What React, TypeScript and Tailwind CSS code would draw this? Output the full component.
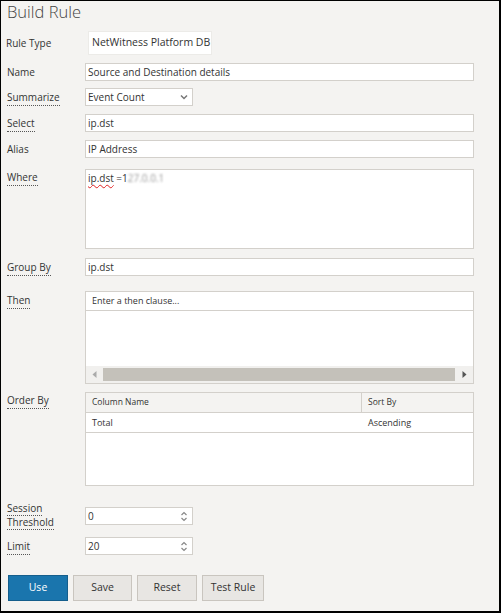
import React from "react";

const font = { fontFamily: '"Open Sans", "Liberation Sans", sans-serif' };

function Label({ children, dotted = false, className = "" }: { children: React.ReactNode; dotted?: boolean; className?: string }) {
  return (
    <div className={`w-[78px] shrink-0 text-[10px] leading-[13px] text-[#333] ${className}`}>
      <span className={dotted ? "border-b border-dotted border-[#555] pb-[1px]" : ""}>{children}</span>
    </div>
  );
}

function Input({ value, className = "w-[389px]" }: { value: string; className?: string }) {
  return (
    <div className={`h-[18px] bg-white border border-[#d3d0cb] px-[2px] flex items-center text-[10px] text-[#333] whitespace-nowrap ${className}`}>
      {value}
    </div>
  );
}

function Spinner() {
  return (
    <svg width="8" height="11" viewBox="0 0 8 11" className="mr-[4px]">
      <path d="M1.5 4 L4 1.5 L6.5 4" fill="none" stroke="#888" strokeWidth="1.2" />
      <path d="M1.5 7 L4 9.5 L6.5 7" fill="none" stroke="#888" strokeWidth="1.2" />
    </svg>
  );
}

export default function App() {
  return (
    <div style={font} className="w-[501px] h-[613px] bg-[#f4f3f1] border-t border-l border-r-2 border-b-2 border-black flex flex-col pl-[6px] overflow-hidden">
      <div className="h-[22px] text-[16.5px] leading-[22px] font-light text-[#444] pt-[0px]">Build Rule</div>

      {/* Rule type */}
      <div className="flex items-center mt-[8px] h-[24px]">
        <Label className="ml-[-1px] w-[82px]">Rule Type</Label>
        <div className="h-[24px] w-[124px] bg-white border border-[#ecebe8] flex items-center px-[3px] text-[10.5px] text-[#333] whitespace-nowrap">NetWitness Platform DB</div>
      </div>

      <div className="flex items-center mt-[8px]">
        <Label>Name</Label>
        <Input value="Source and Destination details" />
      </div>

      <div className="flex items-center mt-[7px]">
        <Label dotted>Summarize</Label>
        <div className="h-[18px] w-[108px] bg-white border border-[#d3d0cb] pl-[2px] flex items-center justify-between text-[10px] text-[#333]">
          <span>Event Count</span>
          <svg width="8" height="6" viewBox="0 0 8 6" className="mr-[4px]">
            <path d="M1 1.5 L4 4.5 L7 1.5" fill="none" stroke="#777" strokeWidth="1.5" />
          </svg>
        </div>
      </div>

      <div className="flex items-center mt-[8px]">
        <Label dotted>Select</Label>
        <Input value="ip.dst" />
      </div>

      <div className="flex items-center mt-[8px]">
        <Label>Alias</Label>
        <Input value="IP Address" />
      </div>

      <div className="flex items-start mt-[11px]">
        <Label dotted className="pt-[2px]">Where</Label>
        <div className="h-[80px] w-[389px] bg-white border border-[#d3d0cb] px-[2px] pt-[1px] text-[10px] leading-[14px] text-[#333]">
          <span className="underline decoration-wavy decoration-[#e02020] decoration-[1px] underline-offset-2">ip.dst</span>{" "}=1
          <span className="blur-[1.2px] text-[#999]">27.0.0.1</span>
        </div>
      </div>

      <div className="flex items-center mt-[9px]">
        <Label dotted>Group By</Label>
        <Input value="ip.dst" />
      </div>

      <div className="flex items-start mt-[15px]">
        <Label dotted className="pt-[3px]">Then</Label>
        <div className="h-[93px] w-[389px] bg-white border border-[#d3d0cb] flex flex-col">
          <div className="h-[19px] border-b border-[#d3d0cb] flex items-center px-[6px] text-[9px] text-[#333]">Enter a then clause...</div>
          <div className="flex-1" />
          <div className="h-[17px] bg-[#f1f0ee] flex items-center">
            <div className="w-[17px] flex items-center justify-center">
              <svg width="5" height="7" viewBox="0 0 5 7"><path d="M4.5 0 L0.5 3.5 L4.5 7 Z" fill="#aaa" /></svg>
            </div>
            <div className="h-[13px] w-[352px] bg-[#c4c1ba]" />
            <div className="flex-1 flex items-center justify-center">
              <svg width="5" height="7" viewBox="0 0 5 7"><path d="M0.5 0 L4.5 3.5 L0.5 7 Z" fill="#555" /></svg>
            </div>
          </div>
        </div>
      </div>

      <div className="flex items-start mt-[8px]">
        <Label dotted className="pt-[2px]">Order By</Label>
        <div className="h-[94px] w-[389px] bg-white border border-[#d3d0cb] flex flex-col text-[#333]">
          <div className="h-[20px] bg-[#f4f3f1] border-b border-[#d3d0cb] flex text-[8.5px]">
            <div className="w-[276px] border-r border-[#d3d0cb] flex items-center px-[6px]">Column Name</div>
            <div className="flex-1 flex items-center px-[6px]">Sort By</div>
          </div>
          <div className="h-[20px] border-b border-[#d3d0cb] flex text-[9px]">
            <div className="w-[277px] flex items-center px-[6px]">Total</div>
            <div className="flex-1 flex items-center px-[5px]">Ascending</div>
          </div>
        </div>
      </div>

      <div className="flex items-center mt-[17px] h-[26px]">
        <div className="w-[78px] shrink-0 text-[10px] leading-[13px] text-[#333] flex flex-col items-start">
          <span className="border-b border-dotted border-[#555]">Session</span>
          <span className="border-b border-dotted border-[#555]">Threshold</span>
        </div>
        <div className="h-[18px] w-[108px] bg-white border border-[#d3d0cb] pl-[2px] flex items-center justify-between text-[10px] text-[#333]">
          <span>0</span>
          <Spinner />
        </div>
      </div>

      <div className="flex items-center mt-[8px]">
        <Label dotted>Limit</Label>
        <div className="h-[18px] w-[108px] bg-white border border-[#d3d0cb] pl-[2px] flex items-center justify-between text-[10px] text-[#333]">
          <span>20</span>
          <Spinner />
        </div>
      </div>

      <div className="flex items-center gap-[5px] mt-[20px] ml-[1px]">
        <button className="h-[26px] w-[60px] bg-[#1a75ad] border border-[#155e8c] text-white text-[10.5px]">Use</button>
        <button className="h-[26px] w-[59px] bg-[#e8e6e3] border border-[#c9c5bf] text-[#333] text-[10.5px]">Save</button>
        <button className="h-[26px] w-[60px] bg-[#e8e6e3] border border-[#c9c5bf] text-[#333] text-[10.5px]">Reset</button>
        <button className="h-[26px] w-[62px] bg-[#e8e6e3] border border-[#c9c5bf] text-[#333] text-[10.5px]">Test Rule</button>
      </div>
    </div>
  );
}
